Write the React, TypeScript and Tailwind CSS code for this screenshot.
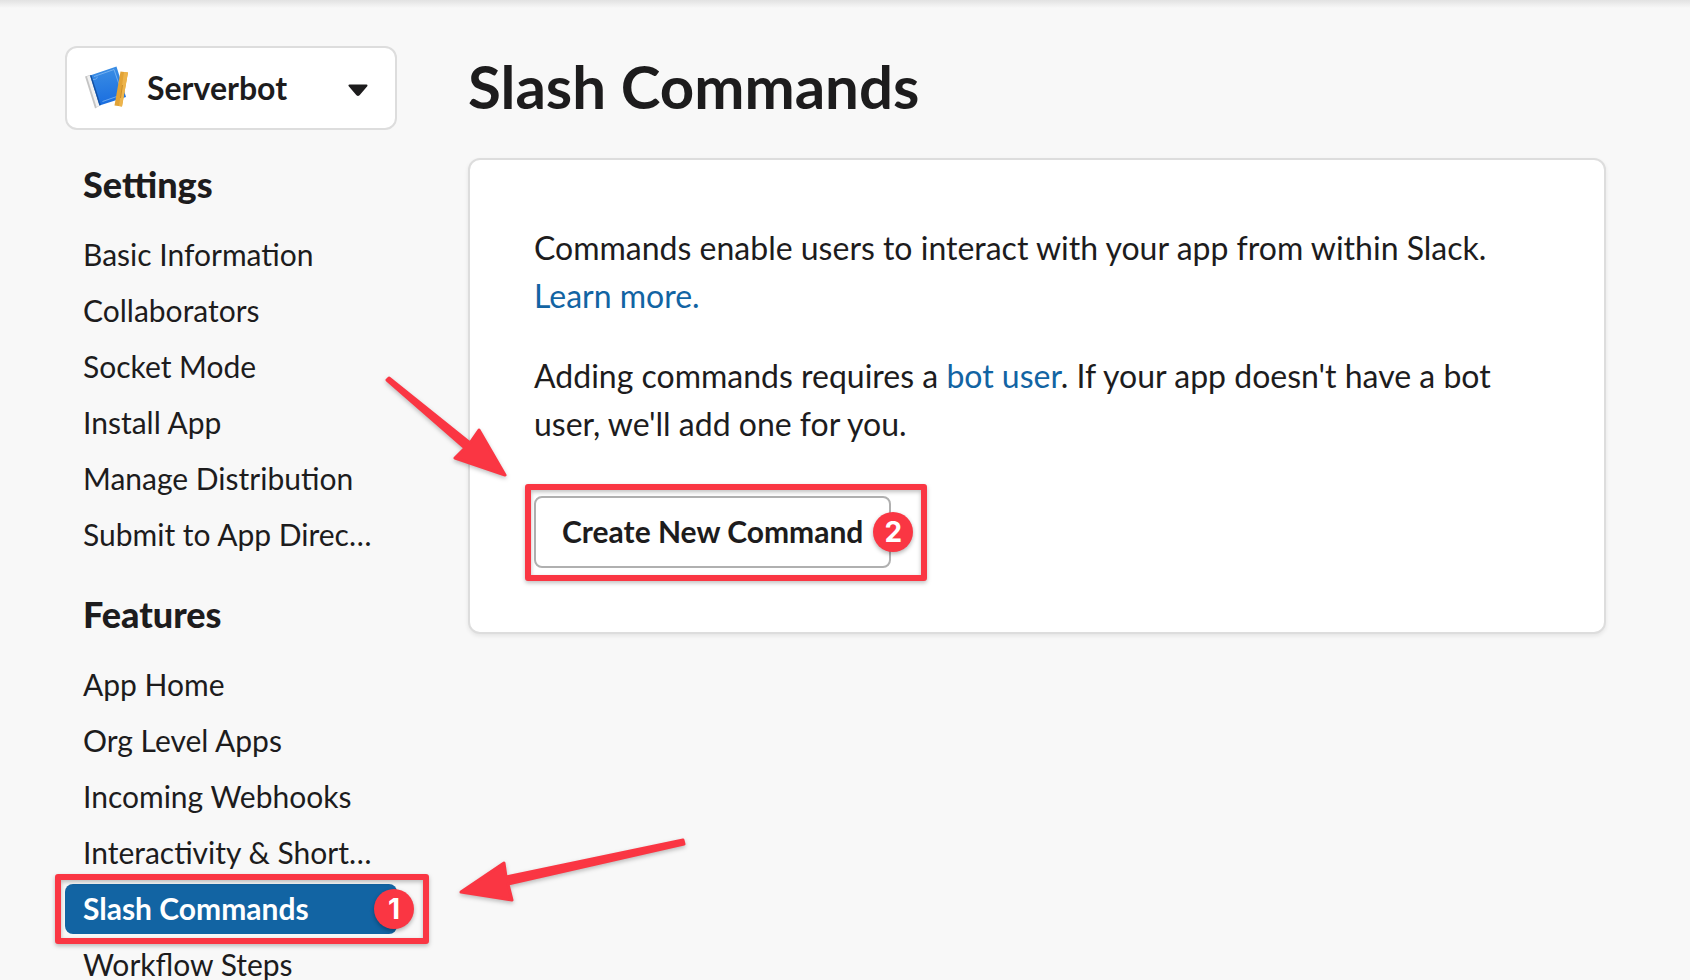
import type { ReactNode } from 'react';

interface NavSection {
  title: string;
  items: string[];
}

const ACTIVE_ITEM = 'Slash Commands';

const SECTIONS: NavSection[] = [
  {
    title: 'Settings',
    items: [
      'Basic Information',
      'Collaborators',
      'Socket Mode',
      'Install App',
      'Manage Distribution',
      'Submit to App Directory',
    ],
  },
  {
    title: 'Features',
    items: [
      'App Home',
      'Org Level Apps',
      'Incoming Webhooks',
      'Interactivity & Shortcuts',
      'Slash Commands',
      'Workflow Steps',
    ],
  },
];

const AppIcon = () => (
  <svg className="w-11 h-11 shrink-0" viewBox="0 0 44 44" fill="none" aria-hidden="true">
    <defs>
      <linearGradient id="cover" x1="20" y1="2" x2="24" y2="38" gradientUnits="userSpaceOnUse">
        <stop stopColor="#3a8de4" />
        <stop offset="1" stopColor="#1a6ee0" />
      </linearGradient>
    </defs>
    <path d="M0 10.500 5 9 15 39.500 10 42.500Z" fill="#c4c4c4" />
    <path d="M2 10.500 5.500 9.500 15 39.500 11.500 41Z" fill="#f1f1f1" />
    <path d="M5 9.500 31.500 .5 41 31 14.500 39.500Z" fill="url(#cover)" />
    <path d="M5 9.500 6.300 9.100 15.800 39 14.500 39.500Z" fill="#15509f" />
    <path d="M9 10.500 29 3.500l8.500 25-20 7" stroke="#8ec0f5" strokeWidth=".7" />
    <path d="M8 13.500q5 0 4-3" stroke="#8ec0f5" strokeWidth=".6" />
    <path d="M35.500 5.500 43 6.500 37 40.500 29.500 39.500Z" fill="#e2a336" />
    <path d="M39 6 43 6.500 37 40.500 34 40Z" fill="#edb44b" />
    <path d="m37.500 19-2 13" stroke="#b97c1d" strokeWidth=".7" />
  </svg>
);

const StepBadge = ({ className, children }: { className: string; children: ReactNode }) => (
  <span
    className={`absolute top-1/2 -translate-y-1/2 w-10 h-10 rounded-full bg-[#fa3643] text-white font-['Inter',sans-serif] text-[28px] leading-10 font-bold text-center shadow-[0_2px_4px_rgba(0,0,0,0.3)] ${className}`}
  >
    {children}
  </span>
);

const NavItem = ({ label }: { label: string }) => {
  if (label !== ACTIVE_ITEM) {
    return (
      <li>
        <a href="#" className="block h-[50px] pl-[18px] pr-6 leading-12 truncate">
          {label}
        </a>
      </li>
    );
  }

  return (
    <li className="relative">
      <a
        href="#"
        aria-current="page"
        className="block h-[50px] px-[18px] leading-12 rounded-lg bg-[#1264a3] text-white font-bold"
      >
        {label}
      </a>
      <div className="absolute -left-[10px] -right-8 -top-[10px] -bottom-[10px] border-6 border-[#fa3643] rounded-[3px] drop-shadow-[0_2px_2px_rgba(0,0,0,0.25)] pointer-events-none" />
      <StepBadge className="-right-[17px]">1</StepBadge>
      <svg
        className="absolute left-full -top-12 ml-[60px] w-[232px] h-[70px] overflow-visible drop-shadow-[0_2px_2px_rgba(0,0,0,0.25)] pointer-events-none"
        viewBox="0 0 232 70"
        aria-hidden="true"
      >
        <path
          d="M226 4 227 8 51 48 55 64 4 56 47 27 49 41Z"
          fill="#fa3643"
          stroke="#fa3643"
          strokeWidth="3"
          strokeLinejoin="round"
        />
      </svg>
    </li>
  );
};

const Sidebar = () => (
  <aside className="w-[332px] shrink-0">
    <button
      type="button"
      className="flex items-center w-full h-[84px] pl-[18px] pr-[27px] bg-white border-2 border-[#ddd] rounded-xl"
    >
      <AppIcon />
      <span className="ml-[18px] text-[32px] font-bold">Serverbot</span>
      <svg className="ml-auto w-5 h-3 mt-1" viewBox="0 0 20 12" aria-hidden="true">
        <path d="M1.500 1.500h17L10.800 10.500q-.8.800-1.600 0Z" fill="#1d1c1d" stroke="#1d1c1d" strokeWidth="2" strokeLinejoin="round" />
      </svg>
    </button>

    <nav>
      {SECTIONS.map((section) => (
        <section key={section.title} className="mt-[30px]">
          <h2 className="mb-[22px] pl-[18px] text-[36px] leading-12 font-black">{section.title}</h2>
          <ul className="flex flex-col gap-1.5 text-[30px]">
            {section.items.map((item) => (
              <NavItem key={item} label={item} />
            ))}
          </ul>
        </section>
      ))}
    </nav>
  </aside>
);

const CreateCommand = () => (
  <div className="relative w-fit mt-12">
    <button
      type="button"
      className="h-[72px] px-[26px] pb-0.5 bg-white border-2 border-[#b0b0b0] rounded-lg text-[30px] font-bold whitespace-nowrap"
    >
      Create New Command
    </button>
    <div className="absolute -left-[9px] -right-9 -top-3 -bottom-[13px] border-6 border-[#fa3643] rounded-[3px] drop-shadow-[0_2px_2px_rgba(0,0,0,0.25)] pointer-events-none" />
    <StepBadge className="-right-[22px]">2</StepBadge>
    <svg
      className="absolute right-full bottom-full mr-[26px] mb-[18px] w-[125px] h-[105px] overflow-visible drop-shadow-[0_2px_2px_rgba(0,0,0,0.25)] pointer-events-none"
      viewBox="0 0 125 105"
      aria-hidden="true"
    >
      <path
        d="M6 5 87 70 96 57 122 102 72 85 82 75 4 7Z"
        fill="#fa3643"
        stroke="#fa3643"
        strokeWidth="3"
        strokeLinejoin="round"
      />
    </svg>
  </div>
);

const App = () => {
  return (
    <div className="relative min-h-screen bg-[#f8f8f8] text-[#1d1c1d] font-['Lato',sans-serif]">
      <div className="absolute inset-x-0 top-0 h-2 bg-linear-to-b from-[#e2e2e2] to-[#f8f8f8]" />

      <div className="flex items-start gap-[71px] pt-[46px] pl-[65px] pr-[84px]">
        <Sidebar />

        <main className="flex-1 min-w-0">
          <h1 className="text-[60px] leading-20 font-bold">Slash Commands</h1>

          <div className="mt-8 p-16 bg-white border-2 border-[#ddd] rounded-xl shadow-[0_2px_4px_rgba(0,0,0,0.08)] text-[32px] leading-12">
            <p>
              Commands enable users to interact with your app from within Slack.{' '}
              <a href="#" className="text-[#1264a3]">Learn more.</a>
            </p>
            <p className="mt-8">
              Adding commands requires a <a href="#" className="text-[#1264a3]">bot user</a>. If your app
              doesn't have a bot user, we'll add one for you.
            </p>
            <CreateCommand />
          </div>
        </main>
      </div>
    </div>
  );
};

export default App;
